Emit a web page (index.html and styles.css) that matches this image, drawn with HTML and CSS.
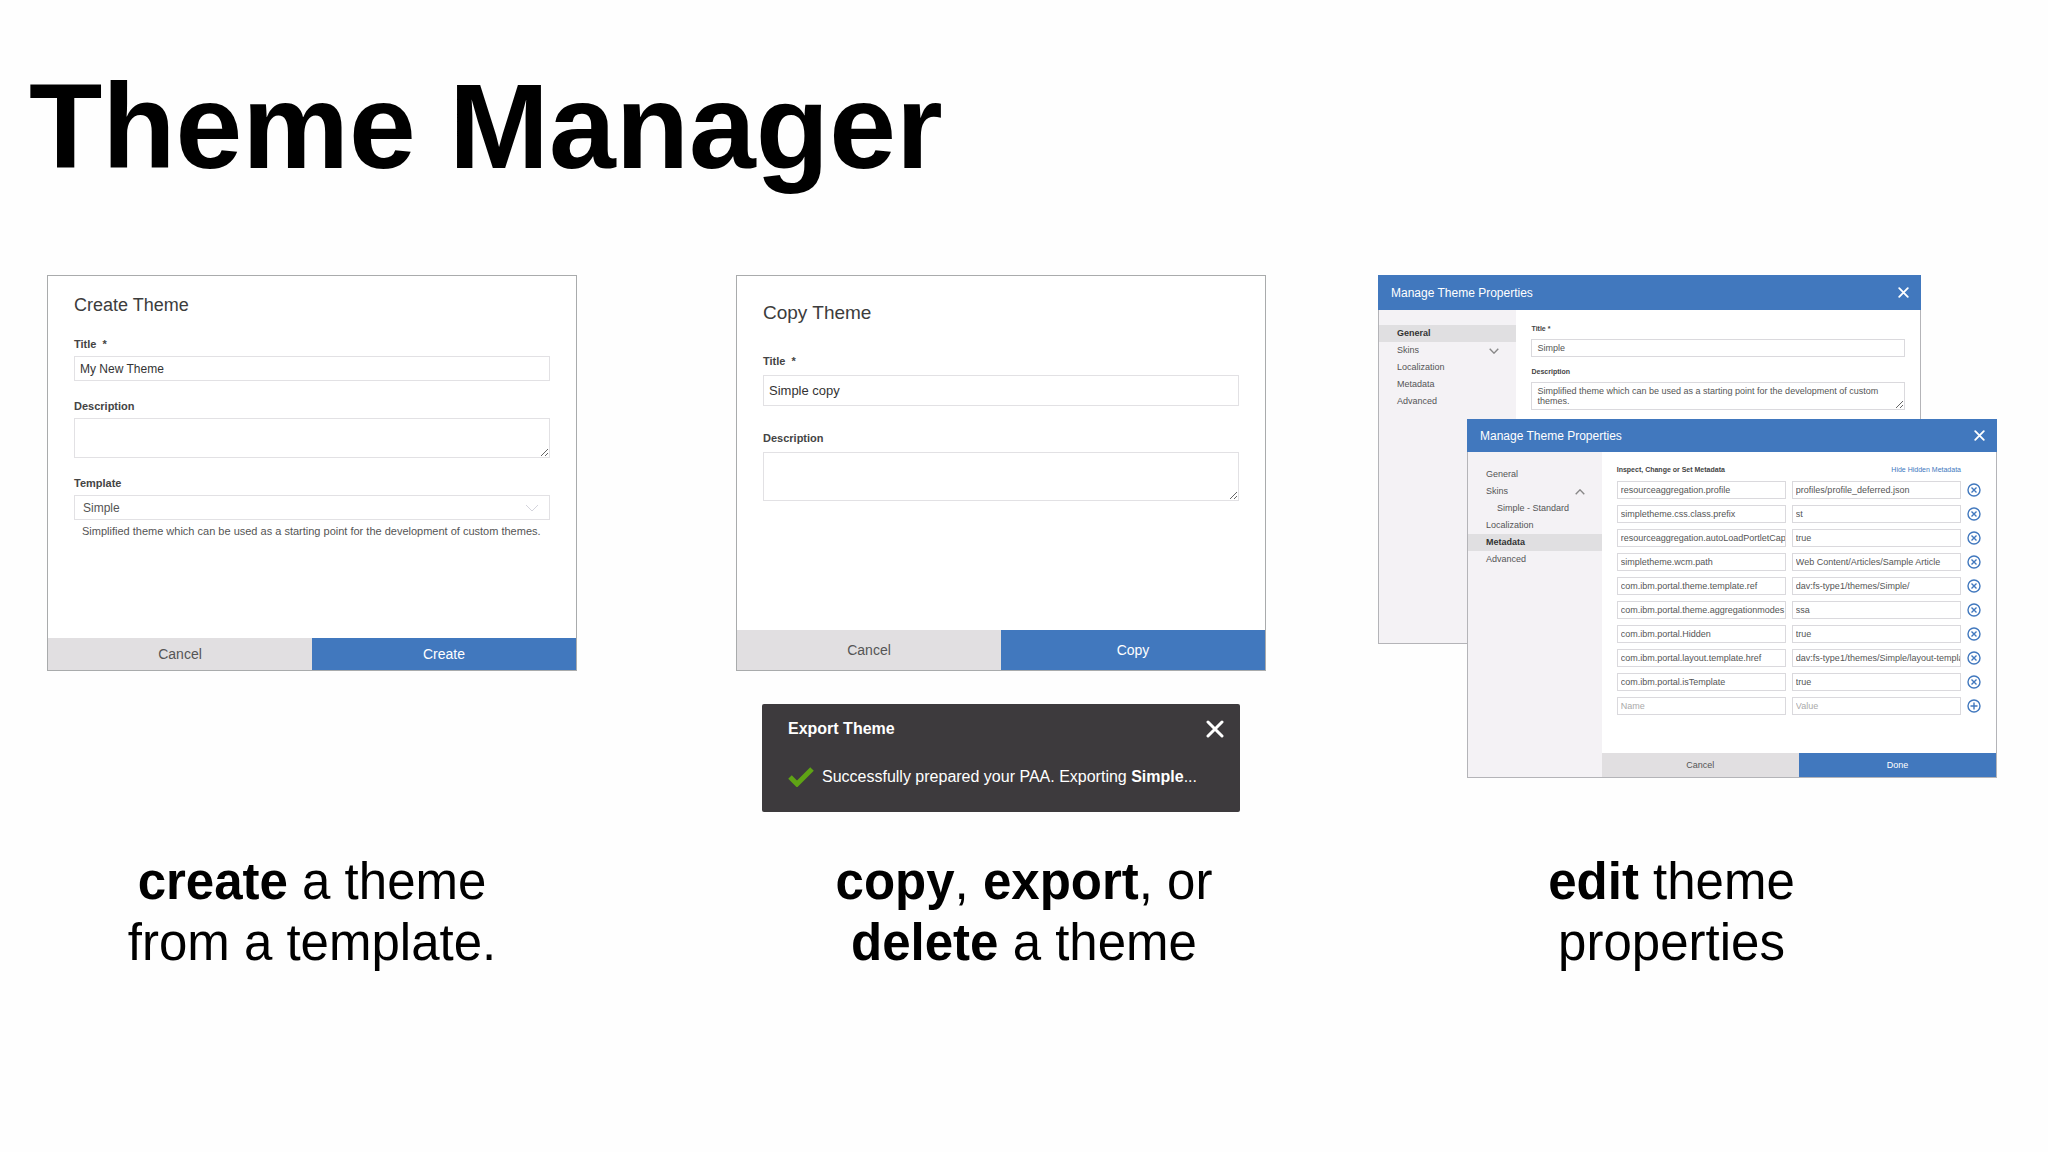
FILE: index.html
```
<!DOCTYPE html>
<html lang="en">
<head>
<meta charset="utf-8" />
<title>Theme Manager</title>
<link rel="stylesheet" href="styles.css">
</head>
<body>
	<!-- shared icons -->
	<svg class="sprite" aria-hidden="true">
		<symbol id="icon-close" viewBox="0 0 18 18"><path d="M2 2L16 16M16 2L2 16" /></symbol>
		<symbol id="icon-chevron" viewBox="0 0 14 8"><path d="M1 1L7 7L13 1" /></symbol>
		<symbol id="icon-remove" viewBox="0 0 14 14"><circle cx="7" cy="7" r="6" /><path d="M4.5 4.5L9.5 9.5M9.5 4.5L4.5 9.5" /></symbol>
		<symbol id="icon-add" viewBox="0 0 14 14"><circle cx="7" cy="7" r="6" /><path d="M7 3.5V10.5M3.5 7H10.5" /></symbol>
	</svg>

	<h1>Theme Manager</h1>

	<main>
		<form class="dialog create">
			<div class="fields">
				<h2>Create Theme</h2>
				<label for="create-title">Title &nbsp;*</label>
				<input id="create-title" type="text" value="My New Theme">
				<label for="create-description">Description</label>
				<textarea id="create-description"></textarea>
				<label for="create-template">Template</label>
				<div class="select">
					<select id="create-template"><option>Simple</option></select>
					<svg class="chevron"><use href="#icon-chevron" /></svg>
				</div>
				<p class="hint">Simplified theme which can be used as a starting point for the development of custom themes.</p>
			</div>
			<div class="buttons">
				<button type="button">Cancel</button>
				<button type="button" class="primary">Create</button>
			</div>
		</form>

		<div class="copy-column">
			<form class="dialog copy">
				<div class="fields">
					<h2>Copy Theme</h2>
					<label for="copy-title">Title &nbsp;*</label>
					<input id="copy-title" type="text" value="Simple copy">
					<label for="copy-description">Description</label>
					<textarea id="copy-description"></textarea>
				</div>
				<div class="buttons">
					<button type="button">Cancel</button>
					<button type="button" class="primary">Copy</button>
				</div>
			</form>
			<div class="toast" role="status">
				<div class="toast-head">
					<strong>Export Theme</strong>
					<button type="button" class="close" aria-label="Close"><svg><use href="#icon-close" /></svg></button>
				</div>
				<p>
					<svg class="check" viewBox="0 0 26 20"><path d="M2 10L9 17L24 2" /></svg>
					<span>Successfully prepared your PAA. Exporting <b>Simple</b>...</span>
				</p>
			</div>
		</div>

		<div class="windows">
			<form class="window general">
				<header>
					<h2>Manage Theme Properties</h2>
					<button type="button" class="close" aria-label="Close"><svg><use href="#icon-close" /></svg></button>
				</header>
				<nav>
					<a href="#" class="active">General</a>
					<a href="#">Skins <svg class="chevron"><use href="#icon-chevron" /></svg></a>
					<a href="#">Localization</a>
					<a href="#">Metadata</a>
					<a href="#">Advanced</a>
				</nav>
				<div class="panel">
					<label for="theme-title">Title *</label>
					<input id="theme-title" type="text" value="Simple">
					<label for="theme-description">Description</label>
					<textarea id="theme-description">Simplified theme which can be used as a starting point for the development of custom themes.</textarea>
				</div>
			</form>

			<form class="window metadata">
				<header>
					<h2>Manage Theme Properties</h2>
					<button type="button" class="close" aria-label="Close"><svg><use href="#icon-close" /></svg></button>
				</header>
				<nav>
					<a href="#">General</a>
					<a href="#">Skins <svg class="chevron up"><use href="#icon-chevron" /></svg></a>
					<a href="#" class="sub">Simple - Standard</a>
					<a href="#">Localization</a>
					<a href="#" class="active">Metadata</a>
					<a href="#">Advanced</a>
				</nav>
				<div class="panel">
					<div class="panel-head">
						<h3>Inspect, Change or Set Metadata</h3>
						<a href="#">Hide Hidden Metadata</a>
					</div>
					<div class="pairs">
						<input type="text" aria-label="Name" value="resourceaggregation.profile">
						<input type="text" aria-label="Value" value="profiles/profile_deferred.json">
						<button type="button" aria-label="Remove"><svg><use href="#icon-remove" /></svg></button>
						<input type="text" aria-label="Name" value="simpletheme.css.class.prefix">
						<input type="text" aria-label="Value" value="st">
						<button type="button" aria-label="Remove"><svg><use href="#icon-remove" /></svg></button>
						<input type="text" aria-label="Name" value="resourceaggregation.autoLoadPortletCap">
						<input type="text" aria-label="Value" value="true">
						<button type="button" aria-label="Remove"><svg><use href="#icon-remove" /></svg></button>
						<input type="text" aria-label="Name" value="simpletheme.wcm.path">
						<input type="text" aria-label="Value" value="Web Content/Articles/Sample Article">
						<button type="button" aria-label="Remove"><svg><use href="#icon-remove" /></svg></button>
						<input type="text" aria-label="Name" value="com.ibm.portal.theme.template.ref">
						<input type="text" aria-label="Value" value="dav:fs-type1/themes/Simple/">
						<button type="button" aria-label="Remove"><svg><use href="#icon-remove" /></svg></button>
						<input type="text" aria-label="Name" value="com.ibm.portal.theme.aggregationmodes">
						<input type="text" aria-label="Value" value="ssa">
						<button type="button" aria-label="Remove"><svg><use href="#icon-remove" /></svg></button>
						<input type="text" aria-label="Name" value="com.ibm.portal.Hidden">
						<input type="text" aria-label="Value" value="true">
						<button type="button" aria-label="Remove"><svg><use href="#icon-remove" /></svg></button>
						<input type="text" aria-label="Name" value="com.ibm.portal.layout.template.href">
						<input type="text" aria-label="Value" value="dav:fs-type1/themes/Simple/layout-templa">
						<button type="button" aria-label="Remove"><svg><use href="#icon-remove" /></svg></button>
						<input type="text" aria-label="Name" value="com.ibm.portal.isTemplate">
						<input type="text" aria-label="Value" value="true">
						<button type="button" aria-label="Remove"><svg><use href="#icon-remove" /></svg></button>
						<input type="text" aria-label="Name" placeholder="Name">
						<input type="text" aria-label="Value" placeholder="Value">
						<button type="button" aria-label="Add"><svg><use href="#icon-add" /></svg></button>
					</div>
				</div>
				<div class="buttons">
					<button type="button">Cancel</button>
					<button type="button" class="primary">Done</button>
				</div>
			</form>
		</div>

		<p class="caption create-caption"><b>create</b> a theme<br>from a template.</p>
		<p class="caption copy-caption"><b>copy</b>, <b>export</b>, or<br><b>delete</b> a theme</p>
		<p class="caption edit-caption"><b>edit</b> theme<br>properties</p>
	</main>
</body>
</html>
```
FILE: styles.css
```
* {
	box-sizing: border-box;
}

body {
	margin: 0;
	background: #fefefe;
	color: #000;
	font-family: "Liberation Sans", Arial, sans-serif;
}

h1, h2, h3, p {
	margin: 0;
}

h1 {
	padding: 56px 29px 79px;
	font-size: 120px;
	line-height: 140px;
}

input, textarea, select, button {
	font-family: inherit;
	margin: 0;
}

button {
	border: none;
	padding: 0;
	cursor: pointer;
}

svg {
	display: block;
	fill: none;
	stroke: currentColor;
}

.sprite {
	display: none;
}

main {
	display: grid;
	grid-template-columns: 530fr 159fr 530fr 112fr 619fr;
	grid-template-areas:
		"create . copy . edit"
		"create-text . copy-text . edit-text";
	row-gap: 39px;
	align-items: start;
	padding: 0 51px 48px 47px;
}

/* create and copy dialogs */
.dialog {
	display: flex;
	flex-direction: column;
	min-height: 396px;
	border: 1px solid #a9abac;
	background: #fff;
}

.create {
	grid-area: create;
}

.fields {
	display: flex;
	flex-direction: column;
	flex: 1;
	padding: 18px 26px 0;
}

.fields h2 {
	margin-bottom: 3px;
	color: #3c3c3c;
	font-size: 18px;
	font-weight: normal;
	line-height: 22px;
}

.fields label {
	margin: 18px 0 5px;
	color: #444;
	font-size: 11px;
	font-weight: bold;
	line-height: 14px;
}

.fields input, .fields textarea, .fields select {
	width: 100%;
	height: 25px;
	padding: 0 5px;
	border: 1px solid #e2e1e4;
	background: #fff;
	color: #333;
	font-size: 12px;
}

.fields textarea {
	height: 40px;
}

.fields .select {
	position: relative;
}

.fields select {
	padding: 0 8px;
	appearance: none;
	color: #555;
}

.select .chevron {
	position: absolute;
	top: 9px;
	right: 11px;
	width: 14px;
	height: 8px;
	color: #d4d4dc;
}

.hint {
	padding: 4px 0 0 8px;
	color: #555;
	font-size: 11px;
	line-height: 14px;
}

.buttons {
	display: flex;
}

.buttons button {
	flex: 1;
	height: 32px;
	background: #e1dfe1;
	color: #555;
	font-size: 14px;
}

.buttons .primary {
	background: #4178be;
	color: #fff;
}

.copy-column {
	grid-area: copy;
}

.copy .fields {
	padding-top: 26px;
}

.copy h2 {
	margin-bottom: 5px;
	font-size: 19px;
}

.copy label {
	margin: 25px 0 7px;
}

.copy input {
	height: 31px;
	font-size: 13px;
}

.copy textarea {
	height: 49px;
}

.copy .buttons button {
	height: 40px;
}

/* export message */
.toast {
	margin: 33px 26px 0;
	padding: 16px 16px 23px 26px;
	border-radius: 2px;
	background: #3d3a3d;
	color: #fff;
	font-size: 16px;
}

.toast-head, .toast p {
	display: flex;
	align-items: center;
}

.toast-head {
	justify-content: space-between;
	margin-bottom: 27px;
	line-height: 18px;
}

.toast p {
	gap: 8px;
	line-height: 24px;
}

.close {
	background: none;
	color: #fff;
}

.close svg {
	width: 18px;
	height: 18px;
	stroke-width: 3;
	stroke-linecap: round;
}

.check {
	width: 26px;
	height: 20px;
	stroke: #5fa315;
	stroke-width: 5;
}

/* the two property windows lie over each other */
.windows {
	grid-area: edit;
	display: grid;
	grid-template-columns: 89fr 454fr 76fr;
	grid-template-rows: 144px 225px auto;
}

.window {
	display: grid;
	grid-template-rows: auto 1fr auto;
	border: 1px solid #b4b4b8;
	border-top: none;
	background: #fff;
}

.general {
	grid-area: 1 / 1 / 3 / 3;
	grid-template-columns: 138fr 405fr;
}

.metadata {
	grid-area: 2 / 2 / 4 / 4;
	grid-template-columns: 134fr 395fr;
	z-index: 1;
	min-height: 359px;
}

.window header {
	grid-column: 1 / 3;
	display: flex;
	align-items: center;
	justify-content: space-between;
	height: 35px;
	margin: 0 -1px;
	padding: 0 12px 0 13px;
	background: #4178be;
	color: #fff;
}

.metadata header {
	height: 33px;
}

.window h2 {
	font-size: 12px;
	font-weight: normal;
}

.window .close svg {
	width: 11px;
	height: 11px;
}

nav {
	grid-row: 2 / 4;
	padding-top: 15px;
	background: #f4f2f5;
}

.metadata nav {
	padding-top: 14px;
}

nav a {
	display: flex;
	align-items: center;
	justify-content: space-between;
	padding: 0 17px 0 18px;
	color: #555;
	font-size: 9px;
	line-height: 17px;
	text-decoration: none;
}

nav .active {
	background: #e0dfe1;
	color: #333;
	font-weight: bold;
}

nav .sub {
	padding-left: 29px;
}

nav .chevron {
	width: 10px;
	height: 6px;
	stroke-width: 2;
	color: #888;
}

nav .up {
	transform: rotate(180deg);
}

.panel {
	padding: 14px 15px;
}

.metadata .panel {
	padding-top: 13px;
}

.panel label, .panel h3, .panel-head a {
	font-size: 7px;
	line-height: 10px;
}

.panel label, .panel h3 {
	display: block;
	color: #444;
	font-weight: bold;
}

.panel input, .panel textarea {
	display: block;
	width: 100%;
	min-width: 0;
	height: 18px;
	padding: 0 0 0 5px;
	border: 1px solid #dad9dd;
	background: #fff;
	color: #555;
	font-size: 9px;
	line-height: 10px;
}

.panel ::placeholder {
	color: #aaa;
}

.panel label {
	margin-bottom: 5px;
}

.panel input + label {
	margin-top: 10px;
}

.panel textarea {
	height: 28px;
	padding: 3px 5px;
}

.panel-head {
	display: flex;
	justify-content: space-between;
	margin-bottom: 6px;
	padding-right: 20px;
}

.panel-head a {
	color: #4178be;
	text-decoration: none;
}

.pairs {
	display: grid;
	grid-template-columns: 1fr 1fr 14px;
	gap: 6px;
	align-items: center;
}

.panel .pairs input {
	padding-left: 3px;
}

.pairs button {
	background: none;
	color: #4178be;
}

.pairs svg {
	width: 14px;
	height: 14px;
	stroke-width: 1.4;
}

.metadata .buttons {
	grid-column: 2;
}

.metadata .buttons button {
	height: 24px;
	font-size: 9px;
}

.caption {
	font-size: 51px;
	line-height: 61px;
	text-align: center;
}

.create-caption {
	grid-area: create-text;
}

.copy-caption {
	grid-area: copy-text;
	padding-left: 46px;
}

.edit-caption {
	grid-area: edit-text;
	padding-right: 32px;
}
```
